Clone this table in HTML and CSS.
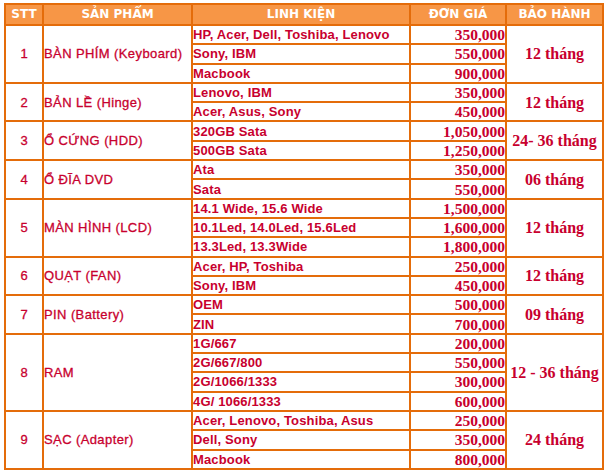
FILE: index.html
```html
<!DOCTYPE html>
<html>
<head>
<meta charset="utf-8">
<link rel="stylesheet" href="styles.css">
</head>
<body>
<table class="price">
<colgroup>
<col class="c-stt"><col class="c-sp"><col class="c-lk"><col class="c-gia"><col class="c-bh">
</colgroup>
<thead>
<tr class="head"><th>STT</th><th>SẢN PHẨM</th><th>LINH KIỆN</th><th>ĐƠN GIÁ</th><th>BẢO HÀNH</th></tr>
</thead>
<tbody>
<tr><td class="stt" rowspan="3">1</td><td class="sp" rowspan="3">BÀN PHÍM (Keyboard)</td><td class="lk">HP, Acer, Dell, Toshiba, Lenovo</td><td class="gia">350,000</td><td class="bh" rowspan="3">12 tháng</td></tr>
<tr><td class="lk">Sony, IBM</td><td class="gia">550,000</td></tr>
<tr><td class="lk">Macbook</td><td class="gia">900,000</td></tr>

<tr><td class="stt" rowspan="2">2</td><td class="sp" rowspan="2">BẢN LỀ (Hinge)</td><td class="lk">Lenovo, IBM</td><td class="gia">350,000</td><td class="bh" rowspan="2">12 tháng</td></tr>
<tr><td class="lk">Acer, Asus, Sony</td><td class="gia">450,000</td></tr>

<tr><td class="stt" rowspan="2">3</td><td class="sp" rowspan="2">Ổ CỨNG (HDD)</td><td class="lk">320GB Sata</td><td class="gia">1,050,000</td><td class="bh" rowspan="2">24- 36 tháng</td></tr>
<tr><td class="lk">500GB Sata</td><td class="gia">1,250,000</td></tr>

<tr><td class="stt" rowspan="2">4</td><td class="sp" rowspan="2">Ổ ĐĨA DVD</td><td class="lk">Ata</td><td class="gia">350,000</td><td class="bh" rowspan="2">06 tháng</td></tr>
<tr><td class="lk">Sata</td><td class="gia">550,000</td></tr>

<tr><td class="stt" rowspan="3">5</td><td class="sp" rowspan="3">MÀN HÌNH (LCD)</td><td class="lk">14.1 Wide, 15.6 Wide</td><td class="gia">1,500,000</td><td class="bh" rowspan="3">12 tháng</td></tr>
<tr><td class="lk">10.1Led, 14.0Led, 15.6Led</td><td class="gia">1,600,000</td></tr>
<tr><td class="lk">13.3Led, 13.3Wide</td><td class="gia">1,800,000</td></tr>

<tr><td class="stt" rowspan="2">6</td><td class="sp" rowspan="2">QUẠT (FAN)</td><td class="lk">Acer, HP, Toshiba</td><td class="gia">250,000</td><td class="bh" rowspan="2">12 tháng</td></tr>
<tr><td class="lk">Sony, IBM</td><td class="gia">450,000</td></tr>

<tr><td class="stt" rowspan="2">7</td><td class="sp" rowspan="2">PIN (Battery)</td><td class="lk">OEM</td><td class="gia">500,000</td><td class="bh" rowspan="2">09 tháng</td></tr>
<tr><td class="lk">ZIN</td><td class="gia">700,000</td></tr>

<tr><td class="stt" rowspan="4">8</td><td class="sp" rowspan="4">RAM</td><td class="lk">1G/667</td><td class="gia">200,000</td><td class="bh" rowspan="4">12 - 36 tháng</td></tr>
<tr><td class="lk">2G/667/800</td><td class="gia">550,000</td></tr>
<tr><td class="lk">2G/1066/1333</td><td class="gia">300,000</td></tr>
<tr><td class="lk">4G/ 1066/1333</td><td class="gia">600,000</td></tr>

<tr><td class="stt" rowspan="3">9</td><td class="sp" rowspan="3">SẠC (Adapter)</td><td class="lk">Acer, Lenovo, Toshiba, Asus</td><td class="gia">250,000</td><td class="bh" rowspan="3">24 tháng</td></tr>
<tr><td class="lk">Dell, Sony</td><td class="gia">350,000</td></tr>
<tr><td class="lk">Macbook</td><td class="gia">800,000</td></tr>
</tbody>
</table>
</body>
</html>
```

FILE: styles.css
```css
html, body {
  margin: 0;
  padding: 0;
  background: #ffffff;
}
body {
  padding: 3px 0 0 4px;
}
.price {
  border-collapse: collapse;
  table-layout: fixed;
  width: 600px;
  font-family: "Liberation Sans", sans-serif;
  color: #c8002e;
}
.c-stt { width: 38px; }
.c-sp { width: 149px; }
.c-lk { width: 218px; }
.c-gia { width: 96px; }
.c-bh { width: 97px; }
.price th, .price td {
  border: 2px solid #e46c0a;
  padding: 0;
  line-height: 15px;
  white-space: nowrap;
  overflow: hidden;
}
.price tr {
  height: 19.3px;
}
.head th {
  background: #f79646;
  color: #ffffff;
  font-family: "DejaVu Sans", sans-serif;
  font-size: 12px;
  font-weight: bold;
  text-align: center;
  height: 19px;
}
.stt {
  text-align: center;
  font-size: 13px;
  -webkit-text-stroke: 0.3px #c8002e;
}
.sp {
  font-size: 13px;
  letter-spacing: 0.4px;
  padding-left: 3px;
  -webkit-text-stroke: 0.3px #c8002e;
}
.lk {
  font-size: 13px;
  letter-spacing: 0.15px;
  font-weight: bold;
  padding-left: 4px;
}
.gia {
  font-family: "Liberation Serif", serif;
  font-weight: bold;
  font-size: 15.5px;
  text-align: right;
  padding-right: 1px;
}
.bh {
  font-family: "Liberation Serif", serif;
  font-weight: bold;
  font-size: 16px;
  text-align: center;
}
```
